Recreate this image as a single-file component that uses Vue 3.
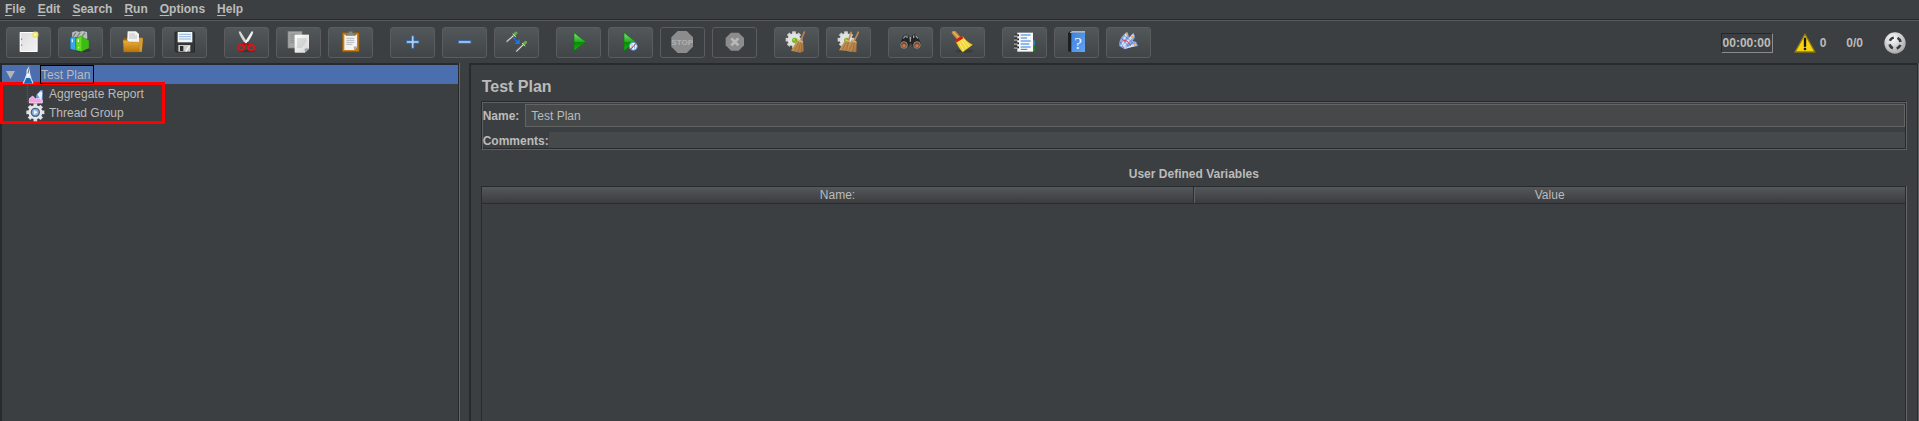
<script setup>
import { ref } from 'vue'

const menus = ['File', 'Edit', 'Search', 'Run', 'Options', 'Help']

const groups = [
  [['new', 'New'], ['templates', 'Templates'], ['open', 'Open'], ['save', 'Save']],
  [['cut', 'Cut'], ['copy', 'Copy'], ['paste', 'Paste']],
  [['expand', 'Expand all'], ['collapse', 'Collapse all'], ['toggle', 'Toggle']],
  [['start', 'Start'], ['nopause', 'Start no pauses'], ['stop', 'Stop'], ['shutdown', 'Shutdown']],
  [['clear', 'Clear'], ['clearall', 'Clear all']],
  [['search', 'Search'], ['reset', 'Reset search']],
  [['functions', 'Function helper'], ['help', 'Help'], ['feather', 'Undo history']]
]
const disabled = ['stop', 'shutdown']

const name = ref('Test Plan')
const comments = ref('')
const gearAngles = [0, 45, 90, 135, 180, 225, 270, 315]
</script>

<template>
  <div class="app">
    <svg class="defs" width="0" height="0" aria-hidden="true">
      <defs>
        <linearGradient id="paper" x1="0" y1="0" x2="1" y2="1">
          <stop offset="0" stop-color="#fff" /><stop offset="1" stop-color="#d4d4d4" />
        </linearGradient>
        <linearGradient id="sheet" x1="0" y1="0" x2="1" y2="1">
          <stop offset="0" stop-color="#dedede" /><stop offset="1" stop-color="#f2f2f2" />
        </linearGradient>
        <linearGradient id="gold" x1="0" y1="0" x2="0" y2="1">
          <stop offset="0" stop-color="#e9b040" /><stop offset="1" stop-color="#b87408" />
        </linearGradient>
        <linearGradient id="green" x1="0" y1="0" x2="0" y2="1">
          <stop offset="0" stop-color="#8fe08c" /><stop offset=".5" stop-color="#22ad1c" /><stop offset=".55" stop-color="#078c05" /><stop offset="1" stop-color="#19b914" />
        </linearGradient>
        <linearGradient id="book" x1="0" y1="0" x2="1" y2="1">
          <stop offset="0" stop-color="#3d82dc" /><stop offset="1" stop-color="#62a5f5" />
        </linearGradient>
        <linearGradient id="straw" x1="0" y1="0" x2="1" y2="1">
          <stop offset="0" stop-color="#d9a868" /><stop offset="1" stop-color="#a5713a" />
        </linearGradient>
        <radialGradient id="silver" cx=".4" cy=".3" r=".7">
          <stop offset="0" stop-color="#fff" /><stop offset="1" stop-color="#a9a9a9" />
        </radialGradient>
        <radialGradient id="glow">
          <stop offset="0" stop-color="#fffde0" /><stop offset=".5" stop-color="#f0e36a" /><stop offset="1" stop-color="#e9da50" stop-opacity="0" />
        </radialGradient>
      </defs>
    </svg>

    <nav class="menubar">
      <button v-for="m in menus" :key="m" type="button" class="menu"><u>{{ m[0] }}</u>{{ m.slice(1) }}</button>
    </nav>

    <div class="toolbar" role="toolbar">
      <div v-for="(g, i) in groups" :key="i" class="group">
        <button v-for="[id, label] in g" :key="id" type="button" class="tool" :aria-label="label" :disabled="disabled.includes(id)">
          <svg viewBox="0 0 66 66" aria-hidden="true">
            <g v-if="id === 'new'">
              <rect x="8" y="3" width="54" height="60" rx="2" fill="#fff" />
              <rect x="11" y="6" width="48" height="54" fill="url(#sheet)" />
              <path d="M14 22v5M14 40v5" stroke="#888" stroke-width="3" />
              <circle cx="55" cy="11" r="12" fill="url(#glow)" />
            </g>
            <g v-else-if="id === 'templates'">
              <ellipse cx="42" cy="58" rx="24" ry="5" fill="#222" opacity=".5" />
              <path d="M10 4l12-4 8 3 10-3 14 3 1 20H8z" fill="#b9bebf" />
              <path d="M11 18l10-13M24 19l9-14M38 18l10-13" stroke="#7c8284" stroke-width="4" />
              <path d="M4 20l16-3 10 4v40L5 54z" fill="#0d79c9" />
              <path d="M5 21l14-3v39L5 53z" fill="#36a9ee" />
              <path d="M10 25v9" stroke="#e5f5ff" stroke-width="4" />
              <path d="M21 22l15-8 23 15v22L37 62 21 57z" fill="#36a80f" />
              <path d="M22 23l16-8v46l-16-4z" fill="#67d823" />
              <path d="M38 15l21 14v22L38 61z" fill="#3dbb13" />
              <path d="M28 25v8" stroke="#eaffdc" stroke-width="4" />
              <circle cx="29" cy="50" r="2" fill="#e7ffd7" />
            </g>
            <g v-else-if="id === 'open'">
              <path d="M6 25l4-4h50l6 3-3 39H7z" fill="#8f6214" />
              <path d="M47 20h17l2 4-4 38H48z" fill="#d69b35" />
              <path d="M20 1h25l9 8v29H18z" fill="#f4f4f4" />
              <path d="M25 9h17M24 15h24M24 21h24" stroke="#aaa" stroke-width="2" />
              <path d="M6 28h13l5 5h29l2 30H9z" fill="url(#gold)" stroke="#a36b0a" stroke-width="1" />
            </g>
            <g v-else-if="id === 'save'">
              <path d="M6 3h56l3 4v56H9l-3-4z" fill="#343638" stroke="#1d1e1f" stroke-width="2" />
              <rect x="14" y="3" width="44" height="31" fill="#f1f6fa" />
              <path d="M18 10h36M18 17h36M18 24h36" stroke="#93b6d9" stroke-width="3" />
              <rect x="16" y="42" width="36" height="20" fill="#c9caca" />
              <rect x="21" y="45" width="10" height="15" fill="#292b2c" />
              <path d="M38 62l12-18" stroke="#f8f8f8" stroke-width="4" />
            </g>
            <g v-else-if="id === 'cut'">
              <ellipse cx="36" cy="60" rx="25" ry="4" fill="#292b2c" opacity=".6" />
              <path d="M11 2l5-1 22 35-6 4C22 26 14 14 11 2z" fill="#d7dada" />
              <path d="M55 2l-5-1-22 35 6 4C44 26 52 14 55 2z" fill="#f2f2f2" />
              <path d="M33 35l-9 9M34 35l9 9" stroke="#b80c0c" stroke-width="8" />
              <ellipse cx="18" cy="50" rx="9" ry="8" fill="none" stroke="#d91515" stroke-width="6" />
              <ellipse cx="49" cy="50" rx="9" ry="8" fill="none" stroke="#d91515" stroke-width="6" />
              <circle cx="33" cy="34" r="3" fill="#eee" />
            </g>
            <g v-else-if="id === 'copy'">
              <rect x="3" y="1" width="42" height="50" fill="#a4a5a5" stroke="#858686" stroke-width="2" />
              <path d="M9 10h27M9 16h13M9 22h13M9 28h13M9 34h13" stroke="#838484" stroke-width="2" />
              <path d="M24 12h42v40L54 64H24z" fill="url(#paper)" stroke="#f8f8f8" stroke-width="2" />
              <path d="M30 24h29M30 30h29M30 36h26M30 42h22M30 48h16" stroke="#aaa" stroke-width="2" />
              <path d="M54 64l-1-11 13-1z" fill="#999" />
            </g>
            <g v-else-if="id === 'paste'">
              <rect x="10" y="5" width="50" height="57" rx="2" fill="#c48121" stroke="#92570a" stroke-width="3" />
              <path d="M16 11h38v37l-9 9H16z" fill="#f3f3f3" />
              <path d="M22 22h24M22 28h24M22 34h24M22 40h18" stroke="#9b9b9b" stroke-width="2" />
              <path d="M45 57l-1-10 10-1z" fill="#aaa" />
              <path d="M21 13V6h8V1h12v5h8v7z" fill="#858b80" stroke="#5f655b" stroke-width="2" />
            </g>
            <path v-else-if="id === 'expand'" d="M31 14h8v15h15v8H39v15h-8V37H16v-8h15z" fill="#b4cdec" stroke="#2e66ad" stroke-width="3" />
            <rect v-else-if="id === 'collapse'" x="16" y="29" width="38" height="8" fill="#b4cdec" stroke="#2e66ad" stroke-width="3" />
            <g v-else-if="id === 'toggle'">
              <g stroke-linecap="round">
                <path d="M6 31L29 11M35 60L56 40" stroke="#777" stroke-width="6" />
                <path d="M6 31L29 11M35 60L56 40" stroke="#eaeaea" stroke-width="3" />
                <path d="M27 12l6-6M56 39l6-5" stroke="#6aa84b" stroke-width="9" />
                <path d="M24 9l8 8M52 37l8 8" stroke="#c5dcb6" stroke-width="3" />
              </g>
              <path d="M25 20l13 13" stroke="#2272e8" stroke-width="4" stroke-dasharray="7 2" />
              <path d="M44 24v15H28z" fill="#2272e8" />
            </g>
            <path v-else-if="id === 'start'" d="M21 5l35 27-35 27z" fill="url(#green)" stroke="#087a08" stroke-width="2" />
            <g v-else-if="id === 'nopause'">
              <path d="M15 5l35 27-35 27z" fill="url(#green)" stroke="#087a08" stroke-width="2" />
              <circle cx="43" cy="46" r="12" fill="#f5f8ff" stroke="#4f8dcc" stroke-width="3" />
              <path d="M39 39v14M47 39v14" stroke="#88aede" stroke-width="3" />
              <path d="M33 57l20-22" stroke="#e32424" stroke-width="3" />
            </g>
            <g v-else-if="id === 'stop'">
              <path d="M20 0h27l19 19v28L47 66H20L1 47V19z" fill="#8c8c8c" />
              <text x="33.5" y="42" text-anchor="middle" class="stop-text">STOP</text>
            </g>
            <g v-else-if="id === 'shutdown'">
              <path d="M24 5h23l16 16v22L47 59H24L8 43V21z" fill="#8c8c8c" />
              <path d="M25 22l21 21M46 22L25 43" stroke="#b9b9b9" stroke-width="8" />
            </g>
            <g v-else-if="id === 'clear' || id === 'clearall'">
              <g stroke="#d4d4d4" stroke-width="11">
                <path v-for="a in gearAngles" :key="a" d="M27 26V1" :transform="`rotate(${a} 27 26)`" />
              </g>
              <circle cx="27" cy="26" r="19" fill="#e2e2e2" />
              <circle cx="29" cy="28" r="8" fill="#69bd17" />
              <circle cx="27" cy="26" r="3" fill="#a8e25c" />
              <g v-if="id === 'clear'">
                <path d="M59 1L47 29" stroke="#b98448" stroke-width="5" />
                <path d="M38 25l16 6 2 30-10 4-28-6z" fill="url(#straw)" />
                <path d="M41 34l-12 25M47 34l-8 28M51 35l-2 28" stroke="#8d6637" stroke-width="2" />
                <path d="M37 27l17 7" stroke="#e1be8d" stroke-width="3" />
              </g>
              <g v-else>
                <path d="M43 2l-8 25M65 2L52 29" stroke="#bc8b50" stroke-width="5" />
                <path d="M26 24l13 5 4 34-15-4-22-1z" fill="url(#straw)" />
                <path d="M45 25l14 6-1 33-33-5z" fill="url(#straw)" />
                <path d="M28 34L15 56M34 33l-6 27M47 35L35 58M52 35l-5 27" stroke="#8d6637" stroke-width="2" />
                <path d="M25 27l14 5M44 28l14 6" stroke="#e1be8d" stroke-width="3" />
              </g>
            </g>
            <g v-else-if="id === 'search'">
              <path d="M12 16l10-6 8 4v10h8V14l8-4 10 6 12 27-13 10-15-8-5-10-5 10-15 8L2 43z" fill="#242526" />
              <path d="M13 22l7-8M50 14l7 8M34 18v14M24 13v8M44 13v8" stroke="#9a9b9b" stroke-width="4" />
              <circle cx="15" cy="42" r="10" fill="#7d4524" stroke="#8c8d8d" stroke-width="3" />
              <circle cx="54" cy="42" r="10" fill="#7d4524" stroke="#8c8d8d" stroke-width="3" />
              <circle cx="15" cy="44" r="5" fill="#c97a45" /><circle cx="54" cy="44" r="5" fill="#c97a45" />
            </g>
            <g v-else-if="id === 'reset'">
              <ellipse cx="40" cy="60" rx="28" ry="5" fill="#333" opacity=".6" />
              <path d="M9 5l14 16" stroke="#c68a3d" stroke-width="13" stroke-linecap="round" />
              <path d="M8 4l13 14" stroke="#e9b66a" stroke-width="4" stroke-linecap="round" />
              <path d="M14 31l21-15c8 11 16 19 30 25L35 64C26 54 20 44 14 31z" fill="#efd638" stroke="#b69916" stroke-width="1" />
              <path d="M24 32l14 27M31 28l16 24M35 24l21 23" stroke="#fff08a" stroke-width="3" />
              <path d="M14 31l21-13" stroke="#d51b17" stroke-width="8" />
            </g>
            <g v-else-if="id === 'functions'">
              <path d="M58 28h7v15h-7z" fill="#3684e5" /><path d="M58 44h7v17h-7z" fill="#129b16" />
              <rect x="13" y="5" width="47" height="57" fill="#f8f8f8" />
              <path d="M23 12h30M23 21h19M23 30h30M23 39h26M23 48h30M23 55h20" stroke="#2e7ce3" stroke-width="3" />
              <path d="M4 13h14M4 25h14M4 37h14M4 49h14" stroke="#151515" stroke-width="5" />
              <path d="M3 15h11M3 27h11M3 39h11M3 51h11" stroke="#ddd" stroke-width="3" />
            </g>
            <g v-else-if="id === 'help'">
              <path d="M9 6l7-5h43v6l-38 3v54l-12-3z" fill="#1c1e21" />
              <path d="M15 4l6-3h39v4H15z" fill="#d6e8f8" />
              <rect x="19" y="5" width="41" height="58" fill="url(#book)" />
              <text x="39" y="54" text-anchor="middle" class="help-text">?</text>
            </g>
            <g v-else>
              <path d="M7 45C5 31 12 16 26 5l6-1 4 15 14-14 4 14-7 11 10 2 6 13-18 3-22 7z" fill="#8fa9df" />
              <path d="M13 45L29 8M18 47l31-35M23 50l34-9" stroke="#dce5f8" stroke-width="6" />
              <path d="M8 30l12 20M13 20l22 27M8 40l22-20M21 13l23 19M26 50l22-16" stroke="#5577c2" stroke-width="2" />
              <path d="M15 26l16 5 10 14" fill="none" stroke="#db3d58" stroke-width="3" />
              <path d="M27 6l5 5M47 15l-4 4M56 41l-6 2" stroke="#f09c36" stroke-width="5" />
            </g>
          </svg>
        </button>
      </div>

      <div class="status">
        <output class="timer">00:00:00</output>
        <button type="button" class="warn">
          <svg viewBox="0 0 66 60" aria-hidden="true">
            <path d="M33 3l30 54H3z" fill="#f8d20c" stroke="#87751a" stroke-width="4" stroke-linejoin="round" />
            <path d="M33 17v22" stroke="#171717" stroke-width="7" stroke-linecap="round" /><circle cx="33" cy="48" r="4" fill="#171717" />
          </svg>
          <span>0</span>
        </button>
        <span class="threads">0/0</span>
        <svg class="remote" viewBox="0 0 66 66" aria-hidden="true">
          <circle cx="33" cy="33" r="32" fill="url(#silver)" />
          <circle cx="33" cy="33" r="17" fill="none" stroke="#393c3d" stroke-width="8" stroke-dasharray="15 11.7" stroke-dashoffset="-5.8" />
        </svg>
      </div>
    </div>

    <main class="split">
      <aside class="tree-pane">
        <ul class="tree" role="tree">
          <li class="row selected" role="treeitem" aria-selected="true">
            <svg class="arrow" viewBox="0 0 9 8" aria-hidden="true"><path d="M0 0h9L4.500 8z" fill="#b4b4b4" /></svg>
            <svg class="flask" viewBox="0 0 36 54" aria-hidden="true">
              <path d="M22 0l-8 11-1 14L2 53h32L25 25l-2-14z" fill="#dce7f2" />
              <path d="M23 2l-5 20" stroke="#6f7478" stroke-width="3" />
              <path d="M9 36h19l5 17H4z" fill="#1668b8" /><path d="M14 25l4 9 5-9" fill="#fff" />
              <path d="M4 52l8-17M33 52l-8-17" stroke="#dae9f8" stroke-width="3" />
            </svg>
            <span class="node-name">Test Plan</span>
          </li>
          <li role="none">
            <ul class="children" role="group">
              <li class="row" role="treeitem">
                <svg class="node-icon" viewBox="0 0 60 57" aria-hidden="true">
                  <path d="M4 0v54h47" fill="none" stroke="#6b6e70" stroke-width="2" stroke-dasharray="3 3" />
                  <path d="M31 30l12-14 7-1v38H28z" fill="#6d9ce3" /><path d="M34 28l11-10 4 6-3 23z" fill="#e8f2ff" />
                  <path d="M10 41l10-8 9 9 10-2 10 6v8H10z" fill="#f2a4df" stroke="#fde9fa" stroke-width="2" />
                </svg>
                <span>Aggregate Report</span>
              </li>
              <li class="row" role="treeitem">
                <svg class="node-icon" viewBox="0 0 60 57" aria-hidden="true">
                  <g stroke="#dfdfdf" stroke-width="11">
                    <path v-for="a in gearAngles" :key="a" d="M28 28V1" :transform="`rotate(${a} 28 28)`" />
                  </g>
                  <circle cx="28" cy="28" r="21" fill="#e7e7e7" />
                  <circle cx="28" cy="28" r="12" fill="#8fb4de" stroke="#45648b" stroke-width="4" />
                  <path d="M24 21l11 7-11 7z" fill="#eef6ff" />
                </svg>
                <span>Thread Group</span>
              </li>
            </ul>
          </li>
        </ul>
      </aside>

      <section class="editor">
        <h1>Test Plan</h1>
        <form class="fields" @submit.prevent>
          <div class="name-row">
            <label for="plan-name">Name:</label>
            <input id="plan-name" v-model="name" type="text" />
          </div>
          <div class="comment-row">
            <label for="plan-comments">Comments:</label>
            <input id="plan-comments" v-model="comments" type="text" />
          </div>
        </form>
        <h2 id="vars-title">User Defined Variables</h2>
        <div class="table-box">
          <table aria-labelledby="vars-title">
            <thead><tr><th scope="col">Name:</th><th scope="col">Value</th></tr></thead>
            <tbody></tbody>
          </table>
        </div>
      </section>
    </main>
  </div>
</template>

<style>
body { margin: 0; background: #3c3f41; }
</style>

<style scoped>
.app {
  display: flex;
  flex-direction: column;
  min-height: 100vh;
  background: #3c3f41;
  color: #bbb;
  font: 12px/16px "Liberation Sans", Arial, sans-serif;
}
.defs { position: absolute; }
button, input { font: inherit; color: inherit; }
button { border: 0; padding: 0; background: none; }
svg { display: block; flex: none; }

.menubar { display: flex; gap: 12px; height: 19px; padding-left: 5px; border-bottom: 1px solid #27292a; }
.menu { height: 18px; font-weight: bold; line-height: 18px; }
.menu u { text-underline-offset: 2px; }

.toolbar { display: flex; gap: 17px; padding: 6px 13px 5px 6px; border-top: 1px solid #585a5b; }
.group { display: flex; gap: 7px; }
.tool {
  box-sizing: border-box;
  display: flex;
  align-items: center;
  justify-content: center;
  width: 45px;
  height: 31px;
  padding: 0 1px 1px 0;
  border: 1px solid #5a5c5d;
  border-radius: 3px;
  background: linear-gradient(#52575a, #414547);
}
.tool:disabled { background: none; }
.tool svg { width: 22px; height: 22px; }
.stop-text { font: bold 24px "Liberation Sans", sans-serif; fill: #b0b0b0; }
.help-text { font: 52px "Liberation Serif", serif; fill: #e8f2fd; }

.status { display: flex; align-items: center; margin-left: auto; font-weight: bold; }
.timer { padding: 1px; border: 1px solid; border-color: #242627 #8a8c8d #8a8c8d #242627; }
.warn { display: flex; align-items: center; gap: 4px; margin-left: 21px; font-weight: bold; }
.warn svg { width: 22px; height: 20px; }
.threads { margin: 0 21px 0 20px; }
.remote { width: 22px; height: 22px; }

.split { flex: 1; display: flex; gap: 10px; }
.tree-pane {
  box-sizing: border-box;
  flex: none;
  width: 23.9%;
  border: solid #282b2d;
  border-width: 2px 1px 0 2px;
  box-shadow: 1px 0 #646667;
}
.tree, .children { margin: 0; padding: 0; list-style: none; }
.row { display: flex; align-items: center; height: 19px; }
.selected { background: #4b6eaf; }
.arrow { width: 9px; height: 8px; margin-left: 4px; }
.flask { width: 12px; height: 18px; margin: 0 6px 0 7px; }
.node-name { box-sizing: border-box; height: 19px; padding: 0 3px 0 0; border: 1px solid #000; line-height: 18px; }
.children {
  box-sizing: border-box;
  width: 165px;
  height: 42px;
  margin: -2px 0 0 -2px;
  border: 3px solid #f00;
  padding-left: 23px;
}
.children .row { gap: 3px; height: 19px; }
.children .row:first-child { height: 18px; }
.node-icon { width: 20px; height: 19px; }

.editor {
  flex: 1;
  display: flex;
  flex-direction: column;
  padding: 12px 10px 0;
  border: solid #282b2d;
  border-width: 2px 1px 0 2px;
  margin-right: 1px;
  box-shadow: 1px 0 #646667;
}
h1 { margin: 0 0 4px 1px; font-size: 16px; line-height: 20px; }
.fields {
  padding: 2px 1px 1px;
  border: 1px solid;
  border-color: #282b2d #5d6061 #5d6061 #282b2d;
  box-shadow: inset 1px 1px #5d6061, inset -1px -1px #282b2d;
}
.name-row, .comment-row { display: flex; align-items: center; }
.name-row { gap: 6px; margin-bottom: 5px; }
label { font-weight: bold; }
.comment-row label { height: 16px; line-height: 18px; }
input {
  box-sizing: border-box;
  flex: 1;
  min-width: 0;
  height: 23px;
  padding: 0 5px;
  border: 1px solid #646464;
  background: #45494a;
  outline: 0;
}
.comment-row input { height: 16px; border: 0; }
h2 { margin: 15px 0 3px; font-size: 12px; line-height: 18px; text-align: center; }
.table-box { flex: 1; border: solid #282b2d; border-width: 1px 1px 0; margin-right: 1px; box-shadow: 1px 0 #646667; }
table { width: 100%; border-collapse: separate; border-spacing: 0; table-layout: fixed; }
th {
  height: 15px;
  padding: 1px 0 0;
  border-bottom: 1px solid #2a2c2e;
  background: linear-gradient(#54585b, #3b3c3d);
  font-weight: normal;
  line-height: 15px;
}
th + th { border-left: 1px solid #2a2c2e; box-shadow: inset 1px 0 #606364; }
</style>
